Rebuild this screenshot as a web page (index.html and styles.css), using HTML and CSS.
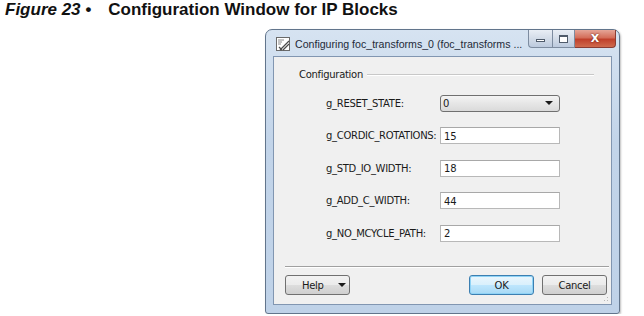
FILE: index.html
```html
<!DOCTYPE html>
<html lang="en">
<head>
  <meta charset="UTF-8">
  <title>Configuration Window for IP Blocks</title>
  <link rel="stylesheet" href="styles.css">
</head>
<body>
  <div class="caption">
    <span class="fig">Figure 23 •</span>
    <span class="title">Configuration Window for IP Blocks</span>
  </div>

  <div class="window">
    <div class="titlebar">
      <svg class="appicon" width="16" height="16" viewBox="0 0 16 16">
        <rect x="1.5" y="1.5" width="13" height="13" fill="#fff" stroke="#6a6a6a"/>
        <path d="M3 4h6M3 6h4M3 8h3" stroke="#8a8a8a"/>
        <path d="M5 14L14 5M8 14l6-6M4 11l3 3" stroke="#4a4a4a" stroke-width="1.2"/>
      </svg>
      <span class="wintitle">Configuring foc_transforms_0 (foc_transforms ...</span>
      <div class="capbtns">
        <div class="capbtn min"><span></span></div>
        <div class="capbtn max"><span></span></div>
        <div class="capbtn close">X</div>
      </div>
    </div>

    <div class="client">
      <div class="group-head">
        <span>Configuration</span>
        <div class="rule"></div>
      </div>

      <div class="fields">
        <label>g_RESET_STATE:</label>
        <div class="combo"><span>0</span><span class="arrow"></span></div>

        <label>g_CORDIC_ROTATIONS:</label>
        <input type="text" value="15">

        <label>g_STD_IO_WIDTH:</label>
        <input type="text" value="18">

        <label>g_ADD_C_WIDTH:</label>
        <input type="text" value="44">

        <label>g_NO_MCYCLE_PATH:</label>
        <input type="text" value="2">
      </div>

      <div class="sep"></div>

      <div class="footer">
        <button class="btn help">Help <span class="arrow"></span></button>
        <div class="right">
          <button class="btn ok">OK</button>
          <button class="btn">Cancel</button>
        </div>
      </div>
      <div class="grip"></div>
    </div>
  </div>
</body>
</html>
```

FILE: styles.css
```css
* { box-sizing: border-box; margin: 0; padding: 0; }
body {
  background: #fff;
  font-family: 'Liberation Sans', Arial, sans-serif;
  color: #000;
}
.caption {
  height: 29px;
  padding: 0 0 0 5px;
  font-size: 17px;
  font-weight: bold;
  display: flex;
  gap: 17px;
  color: #111;
}
.caption .fig { font-style: italic; }

.window {
  margin-left: 265px;
  width: 355px;
  height: 285px;
  border: 1px solid #62758c;
  border-radius: 7px 7px 3px 3px;
  background: linear-gradient(#d6e3f1, #c2d4e9 40%, #bfd2e8);
  padding: 0 7px 8px 7px;
  display: flex;
  flex-direction: column;
  box-shadow: 1px 1px 2px rgba(0,0,0,0.25);
}
.titlebar {
  height: 26px;
  display: flex;
  align-items: center;
  position: relative;
}
.appicon { margin: 2px 4px 0 2px; flex-shrink: 0; }
.wintitle {
  font-family: 'Liberation Sans', Arial, sans-serif;
  font-size: 10.6px;
  color: #1e2a38;
  margin-top: 1px;
  white-space: nowrap;
}
.capbtns {
  position: absolute;
  right: -4px;
  top: 0;
  display: flex;
}
.capbtn {
  height: 18px;
  width: 24px;
  border: 1px solid #7d8ca0;
  border-top: none;
  background: linear-gradient(#e9eef5, #d3dce8 50%, #bccade);
  display: flex;
  align-items: center;
  justify-content: center;
}
.capbtn.min { border-radius: 0 0 0 4px; border-right: none; }
.capbtn.min span { width: 9px; height: 3px; background: #fff; border: 1px solid #4f5b6b; margin-top: 3px; }
.capbtn.max { width: 23px; }
.capbtn.max span { width: 9px; height: 8px; border: 1px solid #4f5b6b; border-top-width: 2px; background: #fff; }
.capbtn.close {
  width: 41px;
  border-color: #8a3c33;
  border-left: none;
  border-radius: 0 0 4px 0;
  background: linear-gradient(#e5a597, #d46e5a 45%, #c0402b 55%, #cf6a4e);
  color: #fff;
  font-family: 'DejaVu Sans', sans-serif;
  font-weight: bold;
  font-size: 11px;
  line-height: 1;
  padding-bottom: 1px;
  text-shadow: 0 0 2px #5a1a10;
}

.client {
  flex: 1;
  background: #f0f0f0;
  border: 1px solid #8196b1;
  font-family: 'DejaVu Sans', sans-serif;
  font-size: 10px;
  letter-spacing: -0.3px;
  color: #1a1a1a;
  padding: 10px 2px 9px 11px;
  display: flex;
  flex-direction: column;
  position: relative;
}
.group-head {
  height: 15px;
  display: flex;
  align-items: center;
  padding-left: 14px;
  gap: 4px;
}
.group-head .rule {
  flex: 1;
  border-top: 1px solid #c8c8c8;
  border-bottom: 1px solid #fff;
  margin-right: 15px;
}
.fields {
  margin: 11px 0 0 41px;
  display: grid;
  grid-template-columns: 114px 120px;
  grid-auto-rows: 20px;
  row-gap: 12.5px;
  align-items: center;
}
.fields input {
  height: 17px;
  border: 1px solid #b8b8b8;
  border-top-color: #a8a8a8;
  background: #fff;
  font-family: inherit;
  font-size: 10px;
  padding: 1px 3px 0;
  color: #1a1a1a;
  width: 120px;
}
.combo {
  height: 17px;
  border: 1px solid #707070;
  border-radius: 3px;
  background: linear-gradient(#f4f4f4, #e6e6e6 50%, #dadada);
  display: flex;
  align-items: center;
  justify-content: space-between;
  padding: 0 6px 0 2px;
}
.arrow {
  width: 0;
  height: 0;
  border-left: 4px solid transparent;
  border-right: 4px solid transparent;
  border-top: 4px solid #1a1a1a;
}
.sep {
  margin: 23px 0 0 0;
  border-top: 1px solid #a0a0a0;
  border-bottom: 1px solid #fff;
}
.footer {
  margin-top: 7px;
  display: flex;
  justify-content: space-between;
  padding-right: 2px;
}
.footer .right { display: flex; gap: 8px; }
.btn {
  width: 65px;
  height: 20px;
  border: 1px solid #707070;
  border-radius: 3px;
  background: linear-gradient(#f2f2f2, #ebebeb 50%, #dddddd 51%, #cfcfcf);
  font-family: 'DejaVu Sans', sans-serif;
  font-size: 10px;
  letter-spacing: -0.3px;
  color: #1a1a1a;
  display: flex;
  align-items: center;
  justify-content: center;
}
.btn.help { gap: 14px; justify-content: flex-start; padding-left: 16px; }
.btn.ok {
  border-color: #3c7fb1;
  background: linear-gradient(#eaf6fd, #d9f0fc 50%, #bee6fd 51%, #a7d9f5);
  box-shadow: inset 0 0 0 1px #8fd3f6;
}
.grip {
  position: absolute;
  right: 1px;
  bottom: 1px;
  width: 10px;
  height: 10px;
  background: radial-gradient(circle, #b8b8b8 0.8px, transparent 1px) 0 0 / 3px 3px;
  clip-path: polygon(100% 0, 100% 100%, 0 100%);
}
```
